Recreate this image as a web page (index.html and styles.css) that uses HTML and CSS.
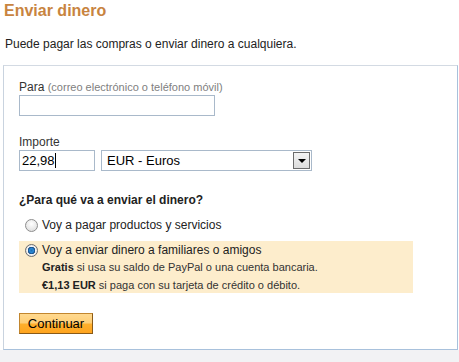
FILE: index.html
```
<!DOCTYPE html>
<html lang="es">
<head>
    <meta charset="UTF-8">
    <title>Enviar dinero</title>
    <link rel="stylesheet" href="styles.css">
</head>
<body>
    <div class="page">
        <h1>Enviar dinero</h1>
        <p class="intro">Puede pagar las compras o enviar dinero a cualquiera.</p>

        <form class="send-box">
            <label class="field-label">Para <span class="hint">(correo electrónico o teléfono móvil)</span></label>
            <div class="text-input wide"></div>

            <label class="field-label amount-label">Importe</label>
            <div class="amount-row">
                <div class="text-input amount">22,98<span class="caret"></span></div>
                <div class="select">
                    <span>EUR - Euros</span>
                    <span class="select-btn"><span class="arrow"></span></span>
                </div>
            </div>

            <h2>¿Para qué va a enviar el dinero?</h2>

            <div class="option">
                <span class="radio"></span>
                <span>Voy a pagar productos y servicios</span>
            </div>

            <div class="option selected">
                <span class="radio checked"></span>
                <div>
                    <div>Voy a enviar dinero a familiares o amigos</div>
                    <div class="note"><b>Gratis</b> si usa su saldo de PayPal o una cuenta bancaria.</div>
                    <div class="note"><b>€1,13 EUR</b> si paga con su tarjeta de crédito o débito.</div>
                </div>
            </div>

            <button type="button" class="btn-continue">Continuar</button>
        </form>
    </div>
</body>
</html>
```

FILE: styles.css
```
* {
    margin: 0;
    padding: 0;
    box-sizing: border-box;
}

body {
    font-family: "Liberation Sans", Arial, sans-serif;
    font-size: 12px;
    color: #222;
    background-color: #f2f2f4;
}

.page {
    background: #fff;
    padding: 0 1px 0 3px;
}

h1 {
    font-size: 16px;
    font-weight: bold;
    color: #c8843f;
    line-height: 20px;
    padding: 1px 0 0 1px;
}

.intro {
    line-height: 16px;
    margin: 15px 0 0 2px;
}

.send-box {
    margin-top: 13px;
    border: 1px solid #a8c1dc;
    border-top-color: #d3dae3;
    border-left-color: #c9d3df;
    padding: 13px 15px 15px 15px;
}

.field-label {
    display: block;
    color: #333;
    line-height: 16px;
}

.hint {
    font-size: 11px;
    color: #808080;
}

.text-input {
    height: 21px;
    border: 1px solid #a9b9ca;
    font-size: 13px;
    line-height: 19px;
    padding-left: 2px;
    color: #000;
}

.wide {
    width: 196px;
}

.amount-label {
    margin-top: 18px;
}

.amount-row {
    display: flex;
    gap: 6px;
}

.amount {
    width: 76px;
    display: flex;
    align-items: center;
}

.caret {
    width: 1px;
    height: 15px;
    background: #000;
}

.select {
    width: 211px;
    height: 21px;
    border: 1px solid #a9b9ca;
    display: flex;
    justify-content: space-between;
    align-items: center;
    font-size: 13px;
    color: #000;
    padding: 0 1px 0 5px;
}

.select-btn {
    width: 17px;
    height: 17px;
    background: linear-gradient(#f4f4f4, #dcdcdc);
    border: 1px solid #6b6b6b;
    display: flex;
    justify-content: center;
    align-items: center;
}

.arrow {
    width: 0;
    height: 0;
    border-left: 4px solid transparent;
    border-right: 4px solid transparent;
    border-top: 4px solid #000;
}

h2 {
    font-size: 12px;
    font-weight: bold;
    color: #222;
    line-height: 16px;
    margin-top: 21px;
}

.option {
    display: flex;
    align-items: flex-start;
    gap: 4px;
    line-height: 16px;
    color: #222;
    padding: 3px 6px;
    margin-top: 6px;
}

.option + .option {
    margin-top: 5px;
}

.option.selected {
    background: #fdedcc;
    width: 394px;
    padding: 1px 6px 0;
}

.radio {
    width: 13px;
    height: 13px;
    flex: none;
    margin-top: 2px;
    border-radius: 50%;
    border: 1px solid #8d8d8d;
    background: radial-gradient(circle at 50% 35%, #ffffff, #d8d8d8);
}

.radio.checked {
    background: radial-gradient(circle, #1f6fb3 0, #2a8ad8 2px, #16467d 3.5px, #f3f3f3 4px, #d0d0d0 100%);
    border-color: #6d6d6d;
}

.note {
    font-size: 11px;
    line-height: 19px;
    color: #333;
}

.note:last-child {
    line-height: 16px;
}

.note b {
    color: #222;
}

.btn-continue {
    display: block;
    margin-top: 20px;
    width: 74px;
    height: 21px;
    font-family: "Liberation Sans", Arial, sans-serif;
    font-size: 13px;
    color: #000;
    border: 1px solid #c2862e;
    border-bottom-color: #8a5a17;
    border-right-color: #8a5a17;
    background: linear-gradient(#ffd98f 0, #ffcf78 45%, #ffaf2c 55%, #ffa41f 100%);
    cursor: pointer;
}
```
